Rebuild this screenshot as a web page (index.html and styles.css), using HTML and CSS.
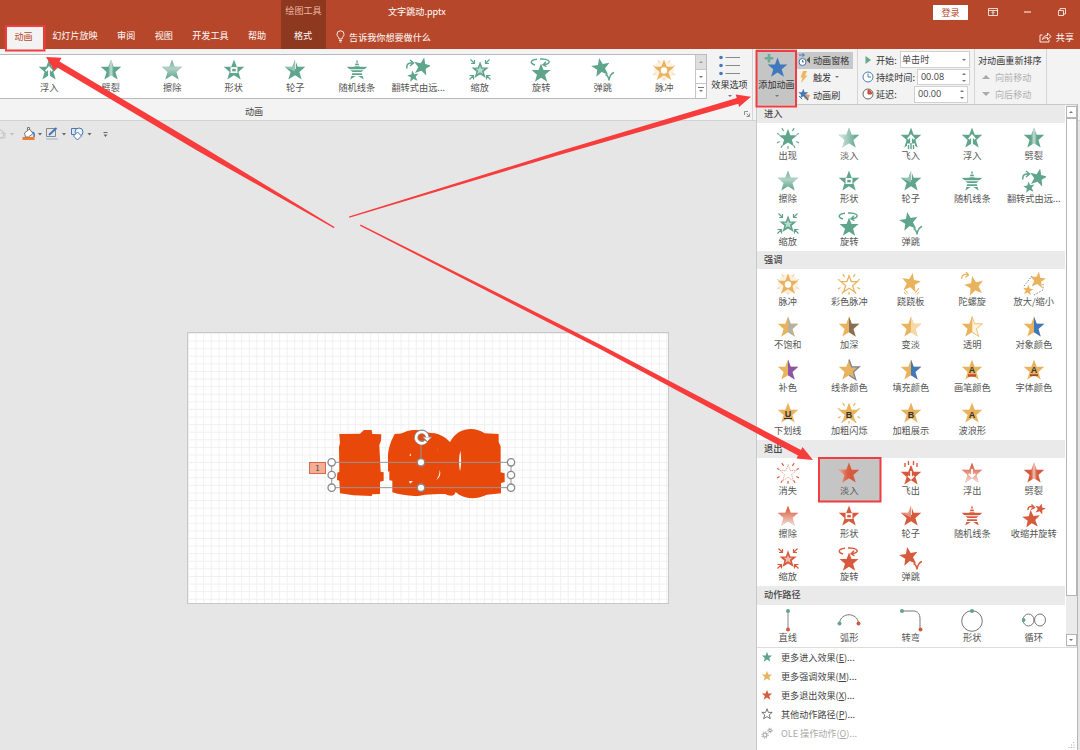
FILE: index.html
```html
<!DOCTYPE html>
<html lang="zh-CN">
<head>
    <meta charset="UTF-8">
    <meta name="viewport" content="width=device-width, initial-scale=1.0">
    <title>文字跳动.pptx</title>
    <link rel="stylesheet" href="styles.css">
</head>
<body>
    <!-- Shared shapes -->
    <svg class="defs" width="0" height="0">
        <defs>
            <linearGradient id="g-left"><stop offset="0.1" stop-color="#fff" stop-opacity="0.7"/><stop offset="0.9" stop-color="#fff" stop-opacity="0"/></linearGradient>
            <linearGradient id="g-exit"><stop offset="0.05" stop-color="#f5b8a4" stop-opacity="0.9"/><stop offset="0.6" stop-color="#d75a3c" stop-opacity="0"/></linearGradient>
            <linearGradient id="g-top" x2="0" y2="1"><stop offset="0.1" stop-color="#fff" stop-opacity="0"/><stop offset="0.9" stop-color="#fff" stop-opacity="0.7"/></linearGradient>
            <linearGradient id="g-bottom" x2="0" y2="1"><stop offset="0.1" stop-color="#fff" stop-opacity="0.2"/><stop offset="0.45" stop-color="#fff" stop-opacity="0.5"/><stop offset="0.95" stop-color="#fff" stop-opacity="0"/></linearGradient>
            <linearGradient id="g-mid"><stop offset="0.36" stop-color="#fff" stop-opacity="0"/><stop offset="0.5" stop-color="#fff" stop-opacity="0.65"/><stop offset="0.64" stop-color="#fff" stop-opacity="0"/></linearGradient>
            <path id="star" d="M12 1.500l2.700 7.300H22.300l-5.900 5.100 2.300 7.600L12 17.200 5.300 21.500l2.300-7.600L1.700 8.800H9.300z"/>
            <path id="half" d="M12 1.500l2.700 7.300H22.300l-5.900 5.100 2.300 7.600L12 17.200z"/>
            <path id="rays" d="M5.800 2.200l1.800 2.600M18.200 2.200l-1.800 2.600M1 7.500l2.400 1M23 7.500l-2.400 1M1 17l2.600-1.500M23 17l-2.600-1.500M12 20v2.700M6.300 19.500l-1.400 2.300M17.700 19.500l1.400 2.300" fill="none" stroke="currentColor" stroke-width="1.200"/>
        </defs>
    </svg>

    <header class="title-bar">
        <div class="title-row">
            <span class="context-title">绘图工具</span>
            <span class="file-name">文字跳动.pptx</span>
            <span class="login">登录</span>
            <svg class="win-icons" width="82" height="12" viewBox="0 0 82 12" fill="none" stroke="#fff">
                <path d="M.5 2.500h9v7h-9zM.5 4.500h9M5 9V5.500M3.500 7L5 5.500 6.500 7" stroke-width=".8"/>
                <path d="M36 6h7"/>
                <path d="M70.500 4.500h5v5h-5zM72 4.500V2.500h5.500v5.500h-2" stroke-width=".8"/>
            </svg>
        </div>
        <nav class="tabs">
            <span class="tab active">动画</span>
            <span class="tab">幻灯片放映</span>
            <span class="tab">审阅</span>
            <span class="tab">视图</span>
            <span class="tab">开发工具</span>
            <span class="tab">帮助</span>
            <span class="tab context">格式</span>
            <svg class="bulb" width="9" height="13" viewBox="0 0 9 13" fill="none" stroke="#fff"><path d="M3 9C3 7 1 6.500 1 4.300a3.500 3.500 0 0 1 7 0C8 6.500 6 7 6 9zM3 10.500h3M3.500 12h2" stroke-width=".9"/></svg>
            <span class="tell-me">告诉我你想要做什么</span>
            <span class="share">
                <svg width="13" height="12" viewBox="0 0 13 12" fill="none" stroke="#fff" stroke-width=".9"><path d="M3.500 4H1v7h9V8.500M3.500 8.500C4 5.500 6 4.500 8.500 4.500V2L12 5.500 8.500 8.500V6.500C6.500 6.500 5 7 3.500 8.500z"/></svg>
                共享
            </span>
        </nav>
    </header>

    <section class="ribbon">
        <div class="anim-group">
            <div class="gallery">
                <div class="gallery-items" id="ribbon-gallery"></div>
                <div class="gallery-scroll">
                    <span class="off"><i class="caret up"></i></span>
                    <span><i class="caret"></i></span>
                    <span><i class="caret more"></i></span>
                </div>
            </div>
            <div class="group-name">动画</div>
        </div>
        <div class="effect-options">
            <svg width="22" height="22" viewBox="0 0 22 22"><path d="M6.500 2.500H21M6.500 10.500H21M6.500 18.500H21" stroke="#888"/><g fill="#4478b8"><circle cx="2" cy="2.500" r="1.800"/><circle cx="2" cy="10.500" r="1.800"/><circle cx="2" cy="18.500" r="1.800"/></g></svg>
            <span>效果选项</span>
            <i class="caret"></i>
            <svg class="launcher" width="6" height="6" viewBox="0 0 6 6" fill="none" stroke="#777" stroke-width=".8"><path d="M.5 4V.5H4M2.500 2.500l2.500 2.500M5.500 2.500v3h-3"/></svg>
        </div>
        <div class="add-anim">
            <svg width="26" height="26" viewBox="0 0 26 26"><use href="#star" transform="translate(2 3) scale(.96)" fill="#3f78bd"/><path d="M5 1v8.500M.7 5.200h8.600" stroke="#6cab94" stroke-width="2.600"/></svg>
            <span>添加动画</span>
            <i class="caret"></i>
        </div>
        <div class="advanced">
            <div class="adv-row pressed">
                <svg width="13" height="14" viewBox="0 0 13 14"><circle cx="4.500" cy="9" r="3.500" fill="#fff" stroke="#47749f"/><path d="M4.500 7v2h1.500M1 2h5M4.500 .5L6.500 2 4.500 3.500" fill="none" stroke="#3f78bd"/><path d="M12 3.500v7L8.500 7z" fill="#555"/></svg>
                <span>动画窗格</span>
            </div>
            <div class="adv-row">
                <svg width="13" height="14" viewBox="0 0 13 14"><path d="M5 1h4L7 5.500h2.500L3 13l1.500-5.500H2.500z" fill="#efb75a"/></svg>
                <span>触发</span><i class="caret"></i>
            </div>
            <div class="adv-row">
                <svg width="13" height="14" viewBox="0 0 13 14"><use href="#star" transform="translate(-.5 0) scale(.48)" fill="#3f78bd"/><path d="M1 8l3 3" stroke="#3f78bd"/><path d="M7 6l5 1-2 5-4-2z" fill="#d9a06a"/><path d="M6 7l4 5" stroke="#47749f" stroke-width="1.500"/></svg>
                <span>动画刷</span>
            </div>
        </div>
        <div class="timing">
            <div class="time-row">
                <svg width="12" height="12" viewBox="0 0 12 12"><path d="M3.500 2v8L9 6z" fill="#6aa58d"/></svg>
                <label>开始:</label>
                <span class="field select">单击时<i class="caret"></i></span>
            </div>
            <div class="time-row">
                <svg width="12" height="12" viewBox="0 0 12 12" fill="#fff" stroke="#4d7fae"><circle cx="6" cy="6" r="5"/><path d="M6 2.500V6h3" fill="none"/></svg>
                <label>持续时间:</label>
                <span class="field">00.08<span class="spin"><i class="caret up"></i><i class="caret"></i></span></span>
            </div>
            <div class="time-row">
                <svg width="12" height="12" viewBox="0 0 12 12" fill="#fff" stroke="#666"><circle cx="6" cy="6" r="5"/><path d="M6 2v4h3.500A3.500 3.500 0 0 0 6 2z" fill="#d9533a" stroke="#c24a30"/></svg>
                <label>延迟:</label>
                <span class="field last">00.00<span class="spin"><i class="caret up"></i><i class="caret"></i></span></span>
            </div>
        </div>
        <div class="reorder">
            <div class="re-row">对动画重新排序</div>
            <div class="re-row dim"><i class="tri up"></i>向前移动</div>
            <div class="re-row dim"><i class="tri"></i>向后移动</div>
        </div>
    </section>

    <div class="quick-bar">
        <svg width="112" height="16" viewBox="0 0 112 16" fill="none">
            <path d="M-2 4.500a4 4 0 1 1 0 7M1 7h4v5H0" stroke="#c4c4c4"/>
            <path d="M22.500 12.500h12" stroke="#ed7d31" stroke-width="3"/>
            <path d="M24.500 7l5-4 3.500 4.500-4.500 3.500h-3zM27.500 5V1.500h2V4" fill="#fff" stroke="#777"/>
            <path d="M32.500 6c2 1 2 3 1.500 5" stroke="#3f78bd" stroke-width="1.500"/>
            <path d="M46.500 2.500h9v8h-9z" stroke="#888"/><path d="M46 13h12" stroke="#bfcbd8" stroke-width="2"/>
            <path d="M49 9l7.500-7" stroke="#3f78bd" stroke-width="2"/>
            <path d="M71.500 2.500h6v6h-6z" stroke="#4478b8"/><circle cx="79" cy="6" r="4" fill="#eef3f8" stroke="#4478b8"/><path d="M77.500 6l4 4-4 4-4-4z" fill="#fff" stroke="#4478b8"/>
            <path d="M38 7h4l-2 2.500zM62 7h4l-2 2.500zM87.500 7h4l-2 2.500zM103.500 8.500h4l-2 2.500z" fill="#666"/><path d="M103.500 6.500h4" stroke="#666"/>
            <path d="M10 7h4l-2 2.500z" fill="#bbb"/>
        </svg>
    </div>

    <main class="workspace">
        <div class="slide">
            <span class="order-tag">1</span>
            <svg class="countdown" width="240" height="100" viewBox="0 0 720 300">
                <g fill="#e8480a">
                    <path d="M148 72l62-1 12-11h23l2 12 27 1-1 19-5 13 4 80 9 2v25l-11 3v37l-23 1-2 5-55-2-40-6-2-38-7-2 1-22 6-3-1-75 3-10z"/>
                    <path d="M294 185V152c-2-30 6-46 10-60l10-20c20 0 26-3 36-8 18-6 46-6 66 4 26 0 48 10 64 28 22-45 75-48 104-26l42 2v25l6 12v78l12 3v26l-11 3v31l-42 4c-40 18-72 12-94-8-6 18-22 10-32 6-28 0-50 2-60 2-30 8-68 2-98-7v-35l-9-1v-27z"/>
                </g>
                <path d="M511 122c-5 20-5 42-1 62 5-18 4-44 1-62zM449 180c0 12-3 20-10 30 12-8 14-20 10-30zM441 110c4 8 4 14 1 22 3-8 2-15-1-22zM357 214l12-1-9 8zM358 137l5-7v7z" fill="#fff"/>
                <path d="M125 157H663V233H125zM393 90V157" fill="none" stroke="#969696" stroke-width="3"/>
                <g fill="#fff" stroke="#8a8a8a" stroke-width="4">
                    <circle cx="125" cy="157" r="11"/><circle cx="125" cy="195" r="11"/><circle cx="125" cy="233" r="11"/>
                    <circle cx="663" cy="157" r="11"/><circle cx="663" cy="195" r="11"/><circle cx="663" cy="233" r="11"/>
                    <circle cx="393" cy="157" r="11"/><circle cx="393" cy="233" r="11"/>
                </g>
                <path d="M408 94a17 17 0 1 1 4-16" fill="none" stroke="#8a8a8a" stroke-width="13"/>
                <path d="M398 81h27l-13 14z" fill="#fff" stroke="#8a8a8a" stroke-width="3"/>
                <path d="M408 94a17 17 0 1 1 4-12" fill="none" stroke="#fff" stroke-width="8"/>
            </svg>
        </div>
    </main>

    <!-- Add animation drop-down -->
    <aside class="drop-panel">
        <div class="panel-body">
            <div class="panel-list" id="panel-list"></div>
            <div class="scrollbar">
                <span class="sb-btn"><i class="caret up"></i></span>
                <span class="thumb"></span>
                <span class="track"></span>
                <span class="sb-btn"><i class="caret"></i></span>
            </div>
        </div>
        <ul class="more-menu">
            <li><svg class="enter" width="12" height="12" viewBox="0 0 24 24"><use href="#star" fill="currentColor"/></svg>更多进入效果(<u>E</u>)...</li>
            <li><svg class="emph" width="12" height="12" viewBox="0 0 24 24"><use href="#star" fill="currentColor"/></svg>更多强调效果(<u>M</u>)...</li>
            <li><svg class="exit" width="12" height="12" viewBox="0 0 24 24"><use href="#star" fill="currentColor"/></svg>更多退出效果(<u>X</u>)...</li>
            <li><svg width="12" height="12" viewBox="0 0 24 24"><use href="#star" fill="#fff" stroke="#666" stroke-width="1.800"/></svg>其他动作路径(<u>P</u>)...</li>
            <li class="dim"><svg width="12" height="12" viewBox="0 0 12 12" fill="none" stroke="#999"><circle cx="4" cy="8" r="2"/><circle cx="4" cy="8" r="3.200" stroke-dasharray="1.200 1.300"/><circle cx="9" cy="3.500" r="1.200"/><circle cx="9" cy="3.500" r="2.200" stroke-dasharray="1 1"/></svg>OLE 操作动作(<u>O</u>)...</li>
        </ul>
        <svg class="grip" width="8" height="8" viewBox="0 0 8 8" fill="#aaa"><path d="M5 1h1v1H5zM3 3.500h1v1H3zM5.500 3.500h1v1h-1zM.5 6h1v1h-1zM3 6h1v1H3zM5.500 6h1v1h-1z"/></svg>
    </aside>

    <!-- Tutorial marks drawn over the window -->
    <svg class="marks" width="1080" height="750" viewBox="0 0 1080 750" fill="#f83b3b">
        <path d="M46 57l15.500 .8-2 3.700L207 149.500 334.500 227 334 228.200 197 150.500 56.500 67l-2 4z"/>
        <path d="M349 216.500L560 151 736.700 98l-1-3.500L751 96.700l-12 10.300-.6-3.200L560 154.800 349.300 217.800z"/>
        <path d="M360.500 224.400L600 344.500 801 450l1.500-3L813 460l-16.500-1.500 1.500-3L600 349 360 225.700z"/>
        <g fill="none" stroke="#f23c3f" stroke-width="2">
            <path d="M6 26h38.500v24.500H6zM756.500 51H796v55.500h-39.500zM819 458h61.500v43.500H819z"/>
        </g>
    </svg>

    <script>
        const star = '<use href="#star" fill="currentColor"/>';
        const shade = id => `<use href="#star" fill="url(#${id})"/>`;
        const right = fill => star + `<use href="#half" fill="${fill}"/>`;
        const arrowUp = '<path d="M12 19v-8M8.800 13.200L12 9.500l3.200 3.700" fill="none" stroke="#fff" stroke-width="1.800"/>';
        const arrowDown = '<path d="M12 8v7.500M8.800 12.800L12 16l3.200-3.200" fill="none" stroke="#fff" stroke-width="1.800"/>';
        const letter = (ch, y) => star + `<text class="glyph" x="12" y="${y || 16.5}">${ch}</text>`;
        const line = (d, w) => `<path d="${d}" fill="none" stroke="currentColor" stroke-width="${w || 1.2}"/>`;
        const mini = (x, y, s, r) => `<use href="#star" fill="currentColor" transform="translate(${x} ${y}) scale(${s}) rotate(${r || 0} 12 12)"/>`;
        const node = (x, y, c) => `<circle cx="${x}" cy="${y}" r="2" fill="${c}"/>`;
        const GREEN = '#5fa58c', RED = '#cf5a40';

        const icons = {
            appear: mini(1.4, 1.4, 0.88) + '<use href="#rays"/>',
            fade: star + shade('g-left'),
            fadeOut: star + shade('g-exit'),
            flyIn: star + arrowUp + '<path d="M8 17.500h8V24H8z" fill="#fff"/>' + line('M9.500 19v4M12 17v6M14.500 19v4', 1.4),
            floatIn: star + arrowUp,
            split: star + shade('g-mid'),
            wipe: star + shade('g-bottom'),
            wipeOut: star + shade('g-top'),
            shape: star + '<rect x="9.400" y="10" width="5.200" height="4.200" fill="currentColor" stroke="#fff" stroke-width="1.700"/>',
            wheel: star + '<path d="M12 1.500v12L1.700 8.800H9.300z" fill="#fff" opacity=".35"/><path d="M12.500 0v11" stroke="#fff" stroke-width=".8"/>',
            bars: star + '<path d="M2 5h20M2 7.800h20M2 11.700h20M2 14.600h20M2 17.500h20" stroke="#fff" stroke-width="1.100"/>',
            growTurn: mini(6, -2, 0.86, 12) + mini(0.5, 11.5, 0.55, -8) + line('M1 10.500C0 6 3 4.500 6.500 5M4 2L7.500 5 4 8', 1.5),
            shrinkTurn: mini(-1, 4.5, 0.86, -5) + mini(12, -1.5, 0.52, 15) + line('M6 6C6 2 9 2 12 3.500M9.500 .5l3 3-3.500 2', 1.4),
            zoom: mini(2, 2, 0.84) + '<use href="#star" fill="#fff" opacity=".6" transform="translate(7 7) scale(.42)"/>'
                + line('M2.500 1.500l4 4M3 5.500h3.500V2M21.500 1.500l-4 4M21 5.500h-3.500V2M1.500 21.500l4-4M1.500 17.500h4v4M22.500 21.500l-4-4M22.500 17.500h-4v4', 1.2),
            swivel: mini(1, 4, 0.92) + line('M6 7C.5 5.500 1 2 8 1.300M11 1C19 .5 23 4 18 6L14.500 6.800M17 3.800l-3 3 3.500 1.800', 1.4),
            bounce: mini(-1, -1.5, 0.9, -10) + line('M14.500 16.500c2 1 3.200 3 3.500 6 .5-4 2-7 5-8', 1.4),
            flyOut: mini(0, 2, 1) + '<path d="M12 10v7.500M9 14.800l3 3 3-3" fill="none" stroke="#fff" stroke-width="1.700"/><path d="M5 0h14v5H5z" fill="#fff" opacity=".5"/>' + line('M6 2v4M9.500 0v4M14.500 0v4M18 2v4', 1.4),
            floatOut: star + shade('g-top') + arrowDown,
            vanish: '<use href="#star" fill="#fff" stroke="currentColor" stroke-dasharray="1.500 1" stroke-width=".7" transform="translate(2.500 2.500) scale(.8)"/><use href="#rays"/>',
            pulse: '<circle cx="12" cy="12" r="10" fill="currentColor" opacity=".18"/><use href="#rays" opacity=".5"/>' + star + '<circle cx="12" cy="12.500" r="3.200" fill="#fff"/>',
            colorPulse: '<use href="#star" fill="#fff" stroke="currentColor" stroke-width="1.600" transform="translate(2.500 2.500) scale(.8)"/><use href="#rays"/>',
            teeter: mini(1, -0.5, 0.92, 10) + line('M5 17l4 4.500M5 20l2 2.500M20 16l-4 5.500M20 20l-2 2.500', 1),
            spin: mini(3, 2.5, 0.93, -12) + line('M2 7C1 3 5 1.500 8 3M6 0l2.500 3L5.500 5.500', 1.3),
            growShrink: mini(6.5, -1.5, 0.78, 8) + mini(0, 12, 0.5, 8) + '<path d="M2 14L10 4M12 23l9-5v-6" fill="none" stroke="#777" stroke-width=".9" stroke-dasharray="1.500 1.500"/>',
            gray: right('#b9b0a3'),
            dark: right('#857057'),
            light: right('#f5d9a8'),
            clear: star + '<use href="#half" fill="#fff4df" stroke="currentColor" stroke-width=".7"/>',
            blue: right('#3f78bd'),
            purple: right('#8a55a8'),
            lineColor: star + '<path d="M12 1.500l2.700 7.300H22.300l-5.900 5.100 2.300 7.600L12 17.200" fill="none" stroke="#7a8694" stroke-width="1.300"/>',
            brush: letter('A', 15) + '<path d="M8 17.500h8" stroke="#d2492a" stroke-width="2.500"/>',
            font: letter('A', 15) + '<path d="M8 17.200h8" stroke="#9c4a2f" stroke-width="1.800"/>',
            underline: letter('U', 15.5) + '<path d="M8 17.500h8" stroke="#333" stroke-width="1.200"/>',
            boldFlash: '<use href="#rays"/>' + letter('B', 16.5),
            bold: letter('B', 16.5),
            wave: letter('A', 16.5),
            line: '<path d="M12 3v19" stroke="#888"/>' + node(12, 3, GREEN) + node(12, 21.5, RED),
            arc: '<path d="M2.500 15C4 4 20 4 21.500 15" fill="none" stroke="#777"/>' + node(2.5, 15.5, GREEN) + node(21.5, 15.5, RED),
            turn: '<path d="M3 3h11c5 0 7 3 7 8v10" fill="none" stroke="#777"/>' + node(3, 3, GREEN) + node(21.5, 21.5, RED),
            circle: '<circle cx="12" cy="13" r="10.300" fill="none" stroke="#777"/>' + node(12, 3, GREEN),
            loop: '<ellipse cx="6.500" cy="12" rx="5.500" ry="6" fill="none" stroke="#777"/><ellipse cx="18" cy="12" rx="5.500" ry="6" fill="none" stroke="#777"/>' + node(1.5, 12, GREEN)
        };

        const ribbonItems = [
            ['floatIn', '浮入'], ['split', '劈裂'], ['wipe', '擦除'], ['shape', '形状'], ['wheel', '轮子'], ['bars', '随机线条'],
            ['growTurn', '翻转式由远...'], ['zoom', '缩放'], ['swivel', '旋转'], ['bounce', '弹跳'], ['pulse', '脉冲', 'emph']
        ];

        const sections = [
            { title: '进入', kind: 'enter', items: [
                ['appear', '出现'], ['fade', '淡入'], ['flyIn', '飞入'], ['floatIn', '浮入'], ['split', '劈裂'],
                ['wipe', '擦除'], ['shape', '形状'], ['wheel', '轮子'], ['bars', '随机线条'], ['growTurn', '翻转式由远...'],
                ['zoom', '缩放'], ['swivel', '旋转'], ['bounce', '弹跳']
            ] },
            { title: '强调', kind: 'emph', items: [
                ['pulse', '脉冲'], ['colorPulse', '彩色脉冲'], ['teeter', '跷跷板'], ['spin', '陀螺旋'], ['growShrink', '放大/缩小'],
                ['gray', '不饱和'], ['dark', '加深'], ['light', '变淡'], ['clear', '透明'], ['blue', '对象颜色'],
                ['purple', '补色'], ['lineColor', '线条颜色'], ['blue', '填充颜色'], ['brush', '画笔颜色'], ['font', '字体颜色'],
                ['underline', '下划线'], ['boldFlash', '加粗闪烁'], ['bold', '加粗展示'], ['wave', '波浪形']
            ] },
            { title: '退出', kind: 'exit', items: [
                ['vanish', '消失'], ['fadeOut', '淡入', 'selected'], ['flyOut', '飞出'], ['floatOut', '浮出'], ['split', '劈裂'],
                ['wipeOut', '擦除'], ['shape', '形状'], ['wheel', '轮子'], ['bars', '随机线条'], ['shrinkTurn', '收缩并旋转'],
                ['zoom', '缩放'], ['swivel', '旋转'], ['bounce', '弹跳']
            ] },
            { title: '动作路径', kind: 'path', items: [
                ['line', '直线'], ['arc', '弧形'], ['turn', '转弯'], ['circle', '形状'], ['loop', '循环']
            ] }
        ];

        function effect([icon, label, extra], kind) {
            return `<div class="effect ${kind} ${extra || ''}">
                <svg width="24" height="24" viewBox="0 0 24 24">${icons[icon]}</svg>
                <span>${label}</span>
            </div>`;
        }

        document.getElementById('ribbon-gallery').innerHTML = ribbonItems.map(i => effect(i, 'enter')).join('');
        document.getElementById('panel-list').innerHTML = sections.map(s => `
            <h3>${s.title}</h3>
            <div class="effects">${s.items.map(i => effect(i, s.kind)).join('')}</div>
        `).join('');
    </script>
</body>
</html>
```

FILE: styles.css
```css
* {
    margin: 0;
    padding: 0;
    box-sizing: border-box;
}

body {
    position: relative;
    width: 1080px;
    height: 750px;
    overflow: hidden;
    display: flex;
    flex-direction: column;
    font-family: "Noto Sans CJK SC", "Liberation Sans", sans-serif;
    font-size: 9.1px;
    line-height: 12px;
    color: #444;
    background: #e6e6e6;
    white-space: nowrap;
}

svg {
    display: block;
    flex: none;
}

.defs {
    position: absolute;
}

/* Small arrows */
.caret {
    width: 0;
    height: 0;
    border: 2px solid transparent;
    border-top: 2.5px solid #777;
    border-bottom: 0;
}

.caret.up {
    border-top: 0;
    border-bottom: 2.5px solid #777;
}

.caret.more {
    position: relative;
}

.caret.more::before {
    content: "";
    position: absolute;
    left: -3px;
    top: -5px;
    width: 6px;
    height: 1px;
    background: #777;
}

/* Title bar */
.title-bar {
    height: 49px;
    background: #b7472a;
    color: #fff;
}

.title-row {
    display: flex;
    align-items: center;
    height: 24px;
}

.context-title {
    width: 45px;
    height: 24px;
    margin-left: 281px;
    line-height: 21px;
    text-align: center;
    background: #8f3820;
    color: #eeb5a4;
}

.file-name {
    margin-left: 62px;
    width: 545px;
    line-height: 12px;
    padding-bottom: 2px;
}

.login {
    width: 35px;
    height: 15px;
    line-height: 14px;
    text-align: center;
    background: #fff;
    color: #b7472a;
}

.win-icons {
    margin-left: 20px;
}

.tabs {
    display: flex;
    align-items: center;
    height: 25px;
}

.tab {
    padding: 0 9.7px;
    height: 25px;
    line-height: 23px;
}

.tab.active {
    margin: 2px 0 0 6px;
    padding: 0 8.5px;
    width: 36.5px;
    height: 23px;
    background: #f3f3f3;
    color: #b7472a;
    line-height: 20px;
}

.tab.context {
    margin-left: 4.7px;
    width: 45px;
    padding: 0;
    text-align: center;
    background: #8f3820;
}

.bulb {
    margin-left: 10.5px;
}

.tell-me {
    margin-left: 4px;
}

.share {
    display: flex;
    align-items: center;
    gap: 4px;
    margin-left: auto;
    padding-right: 6px;
    height: 22px;
}

/* Ribbon */
.ribbon {
    display: flex;
    height: 72px;
    background: #f3f3f3;
    border-bottom: 1px solid #d2d2d2;
}

.anim-group {
    width: 707px;
    padding-top: 5px;
}

.gallery {
    display: flex;
    height: 45px;
    border: 1px solid #b9bbbe;
    border-left: 0;
    background: #fff;
}

.gallery-items {
    display: flex;
    width: 696px;
    padding-left: 18.5px;
    border-right: 1px solid #c6c6c6;
}

.gallery-items .effect {
    width: 61.5px;
    flex: none;
}

.gallery-scroll {
    flex: 1;
    display: flex;
    flex-direction: column;
}

.gallery-scroll span {
    flex: 1;
    display: flex;
    align-items: center;
    justify-content: center;
}

.gallery-scroll span + span {
    border-top: 1px solid #c6c6c6;
}

.gallery-scroll .off {
    background: #dedede;
}

.gallery-scroll .off .caret {
    border-bottom-color: #999;
}

.group-name {
    padding: 6px 0 0 245px;
}

.effect-options {
    display: flex;
    flex-direction: column;
    align-items: center;
    width: 46px;
    padding-top: 6px;
    border-right: 1px solid #d4d4d4;
    color: #333;
}

.effect-options span {
    margin: 1px 0 5px;
}

.launcher {
    margin: 14px 2px 0 0;
    align-self: flex-end;
}

.add-anim {
    display: flex;
    flex-direction: column;
    align-items: center;
    width: 41px;
    height: 57px;
    margin-left: 3px;
    padding-top: 4px;
    background: #c5c5c5;
    color: #333;
}

.add-anim span {
    margin: -1px 0 5px;
}

.advanced {
    width: 61px;
    padding-top: 3px;
    border-right: 1px solid #d4d4d4;
}

.adv-row {
    display: flex;
    align-items: center;
    gap: 2px;
    width: 56px;
    height: 17.3px;
    padding-left: 1px;
    padding-bottom: 1px;
    color: #333;
}

.adv-row .caret {
    margin-left: 2px;
}

.pressed {
    background: #c8c8c8;
}

.timing {
    width: 117px;
    padding: 2px 4px 0 4px;
    border-right: 1px solid #d4d4d4;
}

.time-row {
    display: flex;
    align-items: center;
    gap: 2px;
    height: 17.4px;
    color: #333;
}

.field {
    display: flex;
    align-items: center;
    justify-content: space-between;
    width: 54px;
    height: 16.5px;
    margin-left: auto;
    padding: 0 3px;
    background: #fff;
    border: 1px solid #d0d0d0;
    color: #444;
    font-family: "Open Sans", "Noto Sans CJK SC", sans-serif;
}

.field.select {
    width: 70px;
    padding-left: 1px;
}

.field.last {
    margin-right: 2px;
}

.spin {
    display: flex;
    flex-direction: column;
    gap: 5px;
}

.reorder {
    width: 72px;
    padding: 2px 0 0 3px;
    border-right: 1px solid #d4d4d4;
    color: #333;
}

.re-row {
    display: flex;
    align-items: center;
    height: 17.4px;
}

.re-row.dim {
    color: #b0b0b0;
    padding-left: 4px;
    gap: 5px;
}

.tri {
    border: 4px solid transparent;
    border-top: 4.5px solid #aaa;
    border-bottom: 0;
}

.tri.up {
    border-top: 0;
    border-bottom: 4.5px solid #aaa;
}

.quick-bar {
    height: 28px;
    padding-top: 5px;
}

/* Slide area */
.workspace {
    flex: 1;
    padding: 183px 0 0 187px;
}

.slide {
    position: relative;
    width: 482px;
    height: 272px;
    border: 1px solid #c8c8c8;
    background-color: #fff;
    background-image:
        linear-gradient(90deg, #f0f0f0 1px, transparent 1px),
        linear-gradient(#f0f0f0 1px, transparent 1px);
    background-size: 7.6px 7.6px;
}

.order-tag {
    position: absolute;
    left: 121px;
    top: 129px;
    width: 17px;
    height: 12px;
    line-height: 10px;
    text-align: center;
    font-size: 8px;
    background: #f5ae96;
    border: 1px solid #d4694b;
}

.countdown {
    position: absolute;
    left: 102px;
    top: 77px;
}

/* Effects */
.effect {
    display: flex;
    flex-direction: column;
    align-items: center;
    padding-top: 3px;
    font-size: 9.2px;
}

.effect span {
    margin-top: -1px;
    color: #555;
}

.enter {
    color: #5fa58c;
}

.emph {
    color: #e9b35e;
}

.exit {
    color: #d75a3c;
}

.glyph {
    font: bold 9px "Liberation Sans", sans-serif;
    text-anchor: middle;
    fill: #333;
}

/* Drop-down panel */
.drop-panel {
    position: absolute;
    left: 756px;
    top: 104px;
    width: 322px;
    height: 646px;
    background: #fff;
    border-left: 1px solid #c8c8c8;
    border-right: 1px solid #b5b5b5;
}

.panel-body {
    display: flex;
    height: 543.5px;
    border-top: 1px solid #c8c8c8;
    border-bottom: 1px solid #dcdcdc;
}

.panel-list {
    width: 308px;
}

.panel-list h3 {
    height: 18.2px;
    padding-left: 7px;
    line-height: 17px;
    font-size: 9.2px;
    font-weight: 500;
    background: #eaeaea;
    color: #444;
}

.effects {
    display: grid;
    grid-template-columns: repeat(5, 61.5px);
    grid-auto-rows: 42.7px;
}

.selected {
    background: #c5c5c5;
}

.scrollbar {
    display: flex;
    flex-direction: column;
    width: 12px;
    margin-left: 1px;
    padding: 1px 0;
    background: #ebebeb;
}

.sb-btn {
    display: flex;
    align-items: center;
    justify-content: center;
    height: 12px;
    background: #fff;
    border: 1px solid #b5b5b5;
}

.thumb {
    height: 478px;
    background: #fff;
    border: 1px solid #b5b5b5;
}

.track {
    flex: 1;
}

.more-menu {
    list-style: none;
    padding-top: 0.5px;
    font-size: 9.1px;
}

.more-menu li {
    display: flex;
    align-items: center;
    height: 18.8px;
    padding-left: 4px;
    color: #444;
}

.more-menu svg {
    margin-right: 8px;
}

.more-menu .dim {
    color: #aaa;
}

.grip {
    position: absolute;
    right: 1px;
    bottom: 1px;
}

.marks {
    position: absolute;
    left: 0;
    top: 0;
}
```
